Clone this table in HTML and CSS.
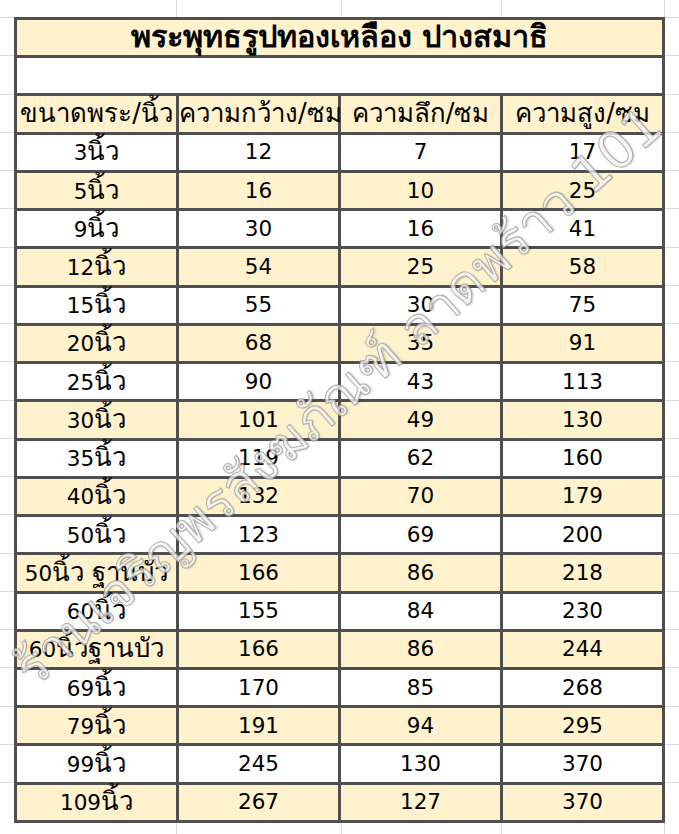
FILE: index.html
```html
<!DOCTYPE html>
<html lang="th">
<head>
<meta charset="utf-8">
<title>พระพุทธรูปทองเหลือง ปางสมาธิ</title>
<link rel="stylesheet" href="styles.css">
</head>
<body>
<div class="sheet">
  <table class="sizes">
    <tr class="title"><td colspan="4"><span class="th">พระพุทธรูปทองเหลือง ปางสมาธิ</span></td></tr>
    <tr class="blank"><td colspan="4"></td></tr>
    <tr class="head"><td><span class="th">ขนาดพระ/นิ้ว</span></td><td><span class="th">ความกว้าง/ซม</span></td><td><span class="th">ความลึก/ซม</span></td><td><span class="th">ความสูง/ซม</span></td></tr>
    <tr><td>3<span class="th">นิ้ว</span></td><td>12</td><td>7</td><td>17</td></tr>
    <tr class="alt"><td>5<span class="th">นิ้ว</span></td><td>16</td><td>10</td><td>25</td></tr>
    <tr><td>9<span class="th">นิ้ว</span></td><td>30</td><td>16</td><td>41</td></tr>
    <tr class="alt"><td>12<span class="th">นิ้ว</span></td><td>54</td><td>25</td><td>58</td></tr>
    <tr><td>15<span class="th">นิ้ว</span></td><td>55</td><td>30</td><td>75</td></tr>
    <tr class="alt"><td>20<span class="th">นิ้ว</span></td><td>68</td><td>35</td><td>91</td></tr>
    <tr><td>25<span class="th">นิ้ว</span></td><td>90</td><td>43</td><td>113</td></tr>
    <tr class="alt"><td>30<span class="th">นิ้ว</span></td><td>101</td><td>49</td><td>130</td></tr>
    <tr><td>35<span class="th">นิ้ว</span></td><td>119</td><td>62</td><td>160</td></tr>
    <tr class="alt"><td>40<span class="th">นิ้ว</span></td><td>132</td><td>70</td><td>179</td></tr>
    <tr><td>50<span class="th">นิ้ว</span></td><td>123</td><td>69</td><td>200</td></tr>
    <tr class="alt"><td>50<span class="th">นิ้ว ฐานบัว</span></td><td>166</td><td>86</td><td>218</td></tr>
    <tr><td>60<span class="th">นิ้ว</span></td><td>155</td><td>84</td><td>230</td></tr>
    <tr class="alt"><td>60<span class="th">นิ้วฐานบัว</span></td><td>166</td><td>86</td><td>244</td></tr>
    <tr><td>69<span class="th">นิ้ว</span></td><td>170</td><td>85</td><td>268</td></tr>
    <tr class="alt"><td>79<span class="th">นิ้ว</span></td><td>191</td><td>94</td><td>295</td></tr>
    <tr><td>99<span class="th">นิ้ว</span></td><td>245</td><td>130</td><td>370</td></tr>
    <tr class="alt"><td>109<span class="th">นิ้ว</span></td><td>267</td><td>127</td><td>370</td></tr>
  </table>
  <div class="watermark">ร้านเจริญพรสังฆภัณฑ์ ลาดพร้าว 101</div>
</div>
</body>
</html>
```
FILE: styles.css
```css
html, body {
  margin: 0;
  padding: 0;
}
body {
  width: 679px;
  height: 834px;
  overflow: hidden;
  background-color: #ffffff;
  background-image:
    linear-gradient(to right, transparent 176px, #dadada 176px, #dadada 177px, transparent 177px),
    linear-gradient(to right, transparent 341px, #dadada 341px, #dadada 342px, transparent 342px),
    linear-gradient(to right, transparent 501px, #dadada 501px, #dadada 502px, transparent 502px),
    linear-gradient(to right, transparent 664px, #dadada 664px, #dadada 665px, transparent 665px),
    repeating-linear-gradient(to bottom, transparent 0, transparent 37.24px, #dadada 37.24px, #dadada 38.24px);
  background-position: 0 0, 0 0, 0 0, 0 0, 0 -20px;
  font-family: "Tahoma", "DejaVu Sans", "Noto Sans", sans-serif;
  color: #000;
}
.sheet {
  position: relative;
  padding: 17px 0 0 14px;
}
.sizes {
  border-collapse: collapse;
  table-layout: fixed;
  width: 651px;
  font-size: 21.5px;
}
.sizes td {
  border: 3px solid #4f4f4f;
  height: 35.24px;
  padding: 0;
  text-align: center;
  vertical-align: middle;
  white-space: nowrap;
  background: #ffffff;
  line-height: 28px;
  overflow: visible;
}
.sizes .th {
  font-size: 1.2em;
}
.sizes tr.alt td,
.sizes tr.head td,
.sizes tr.title td {
  background: #fff2cc;
}
.sizes tr.title td {
  font-weight: bold;
  font-size: 25.5px;
}
.sizes tr:nth-child(3) td:nth-child(1) { width: 162px; }
.sizes tr:nth-child(3) td:nth-child(2) { width: 165px; }
.sizes tr:nth-child(3) td:nth-child(3) { width: 160px; }
.sizes tr:nth-child(3) td:nth-child(4) { width: 162px; }
.watermark {
  position: absolute;
  left: 22px;
  top: 646px;
  line-height: 60px;
  transform: rotate(-41.5deg);
  transform-origin: 0 50%;
  font-size: 52px;
  color: rgba(255, 255, 255, 0.75);
  -webkit-text-stroke: 1.2px rgba(140, 140, 140, 0.6);
  text-shadow: 1px 1px 2px rgba(0, 0, 0, 0.18);
  white-space: nowrap;
  pointer-events: none;
}
```
